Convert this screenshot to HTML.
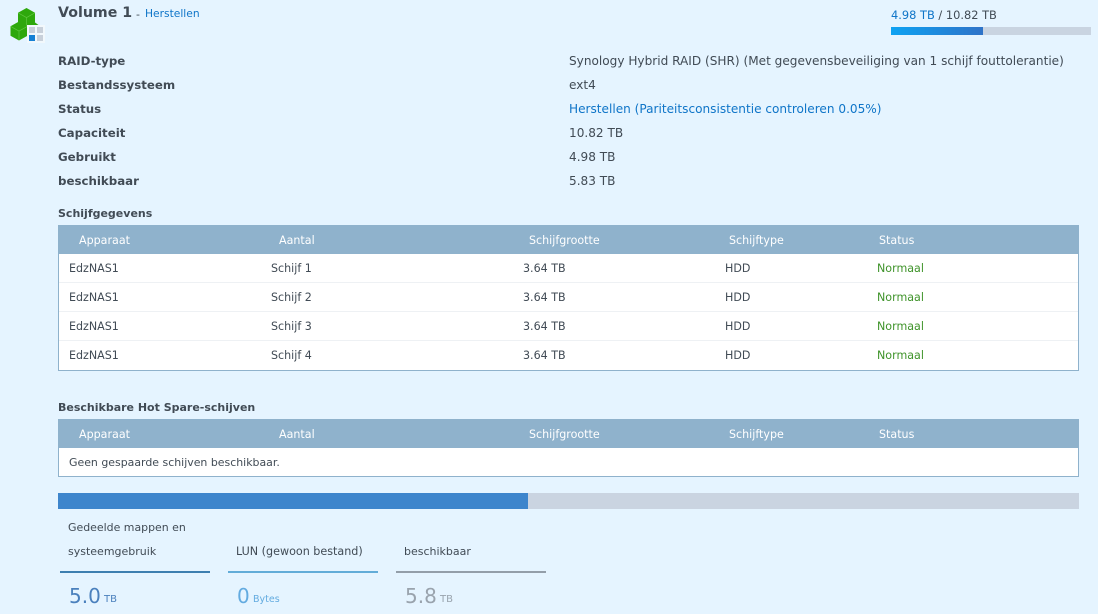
<!DOCTYPE html>
<html><head><meta charset="utf-8"><style>
html,body{margin:0;padding:0;width:1098px;height:614px;overflow:hidden;background:#e5f4ff}
body{position:relative;font-family:"DejaVu Sans",sans-serif;font-size:12px;color:#414b55}
.t{position:absolute;white-space:nowrap;line-height:16px}
.b{font-weight:bold}
.h{color:#fff}
.a{color:#0f75c8}
.box{position:absolute;left:58px;width:1021px;background:#fff;border:1px solid #8fb2cc;border-top:0;box-sizing:border-box}
.hd{position:absolute;left:58px;width:1021px;height:29px;background:#8fb2cc}
.ln{position:absolute;left:59px;width:1019px;height:1px;background:#eef1f4}
.g{color:#3f932a}
.l{font-size:11.800px;left:58px}
.v{font-size:12.100px;left:569px}
.s{font-size:11.100px}
</style></head><body>
<svg style="position:absolute;left:10px;top:8px" width="36" height="36" viewBox="0 0 36 36">
<path d="M17 14l4-2.500 7.500 5.500h-11.500z" fill="#2ea80c"/>
<path d="M16.500 0l8.500 4.800v9.400l-8.500 4.800-8.500-4.800v-9.400z" fill="#2ea80c"/>
<path d="M8 4.800l8.500 4.800 8.500-4.800M16.500 9.600v9.400" fill="none" stroke="#5fc63f" stroke-width=".7"/>
<path d="M9 13.500l8.500 4.800v9.400l-8.500 4.800-8.500-4.800v-9.400z" fill="#2ea80c"/>
<path d="M.5 18.300l8.500 4.800 8.500-4.800M9 23.100v9.400" fill="none" stroke="#5fc63f" stroke-width=".7"/>
<rect x="17" y="17" width="18" height="18" fill="#f2f8fc"/>
<rect x="19" y="19" width="6" height="6" fill="#c8d0da"/><rect x="27" y="19" width="6" height="6" fill="#c8d0da"/><rect x="19" y="27" width="6" height="6" fill="#1580d4"/><rect x="27" y="27" width="6" height="6" fill="#c8d0da"/>
</svg>
<div class="t b" style="left:58px;top:5px;font-size:14.200px">Volume 1</div>
<div class="t" style="left:136px;top:7px;font-size:11px">-</div>
<div class="t a" style="left:145px;top:6px;font-size:10.700px">Herstellen</div>
<div class="t" style="left:891px;top:7px;font-size:11.400px"><span class="a">4.98 TB</span> / 10.82 TB</div>
<div style="position:absolute;left:891px;top:27px;width:200px;height:8px;background:#c9d4e1"><div style="width:92px;height:8px;background:linear-gradient(90deg,#0ea2f2,#2f73c8)"></div></div>

<div class="t b l" style="top:53px">RAID-type</div>
<div class="t b l" style="top:77px">Bestandssysteem</div>
<div class="t b l" style="top:101px">Status</div>
<div class="t b l" style="top:125px">Capaciteit</div>
<div class="t b l" style="top:149px">Gebruikt</div>
<div class="t b l" style="top:173px">beschikbaar</div>
<div class="t v" style="top:53px">Synology Hybrid RAID (SHR) (Met gegevensbeveiliging van 1 schijf fouttolerantie)</div>
<div class="t v" style="top:77px">ext4</div>
<div class="t v a" style="top:101px">Herstellen (Pariteitsconsistentie controleren 0.05%)</div>
<div class="t v" style="top:125px">10.82 TB</div>
<div class="t v" style="top:149px">4.98 TB</div>
<div class="t v" style="top:173px">5.83 TB</div>

<div class="t b" style="left:58px;top:206px;font-size:11px">Schijfgegevens</div>
<div class="box" style="top:225px;height:146px"></div>
<div class="hd" style="top:225px"></div>
<div class="t h s" style="left:79px;top:233px">Apparaat</div><div class="t h s" style="left:279px;top:233px">Aantal</div><div class="t h s" style="left:529px;top:233px">Schijfgrootte</div><div class="t h s" style="left:729px;top:233px">Schijftype</div><div class="t h s" style="left:879px;top:233px">Status</div>
<div class="ln" style="top:282px"></div><div class="ln" style="top:311px"></div><div class="ln" style="top:340px"></div>

<div class="t s" style="left:69px;top:261px">EdzNAS1</div><div class="t s" style="left:271px;top:261px">Schijf 1</div><div class="t s" style="left:523px;top:261px">3.64 TB</div><div class="t s" style="left:725px;top:261px">HDD</div><div class="t g s" style="left:877px;top:261px">Normaal</div>
<div class="t s" style="left:69px;top:290px">EdzNAS1</div><div class="t s" style="left:271px;top:290px">Schijf 2</div><div class="t s" style="left:523px;top:290px">3.64 TB</div><div class="t s" style="left:725px;top:290px">HDD</div><div class="t g s" style="left:877px;top:290px">Normaal</div>
<div class="t s" style="left:69px;top:319px">EdzNAS1</div><div class="t s" style="left:271px;top:319px">Schijf 3</div><div class="t s" style="left:523px;top:319px">3.64 TB</div><div class="t s" style="left:725px;top:319px">HDD</div><div class="t g s" style="left:877px;top:319px">Normaal</div>
<div class="t s" style="left:69px;top:348px">EdzNAS1</div><div class="t s" style="left:271px;top:348px">Schijf 4</div><div class="t s" style="left:523px;top:348px">3.64 TB</div><div class="t s" style="left:725px;top:348px">HDD</div><div class="t g s" style="left:877px;top:348px">Normaal</div>

<div class="t b" style="left:58px;top:400px;font-size:11px">Beschikbare Hot Spare-schijven</div>
<div class="box" style="top:419px;height:58px"></div>
<div class="hd" style="top:419px"></div>
<div class="t h s" style="left:79px;top:427px">Apparaat</div><div class="t h s" style="left:279px;top:427px">Aantal</div><div class="t h s" style="left:529px;top:427px">Schijfgrootte</div><div class="t h s" style="left:729px;top:427px">Schijftype</div><div class="t h s" style="left:879px;top:427px">Status</div>
<div class="t" style="left:69px;top:455px;font-size:10.950px">Geen gespaarde schijven beschikbaar.</div>

<div style="position:absolute;left:58px;top:493px;width:1021px;height:16px;background:#cad4e1"><div style="width:470px;height:16px;background:#3d85cc"></div></div>

<div class="t" style="left:68px;top:520px;font-size:10.950px">Gedeelde mappen en</div>
<div class="t" style="left:68px;top:544px;font-size:11px">systeemgebruik</div>
<div class="t" style="left:236px;top:544px;font-size:11.150px">LUN (gewoon bestand)</div>
<div class="t" style="left:404px;top:544px;font-size:11px">beschikbaar</div>
<div style="position:absolute;left:60px;top:571px;width:150px;height:2px;background:#3d7fb0"></div>
<div style="position:absolute;left:228px;top:571px;width:150px;height:2px;background:#62acd8"></div>
<div style="position:absolute;left:396px;top:571px;width:150px;height:2px;background:#939ea9"></div>
<div class="t" style="left:69px;top:584px;font-size:20px;line-height:24px;color:#4a80bd">5.0</div><div class="t" style="left:104px;top:592px;font-size:10px;color:#4a80bd">TB</div>
<div class="t" style="left:237px;top:584px;font-size:20px;line-height:24px;color:#63abe0">0</div><div class="t" style="left:253px;top:592px;font-size:9.500px;color:#63abe0">Bytes</div>
<div class="t" style="left:405px;top:584px;font-size:20px;line-height:24px;color:#99a3ad">5.8</div><div class="t" style="left:440px;top:592px;font-size:10px;color:#99a3ad">TB</div>
</body></html>
